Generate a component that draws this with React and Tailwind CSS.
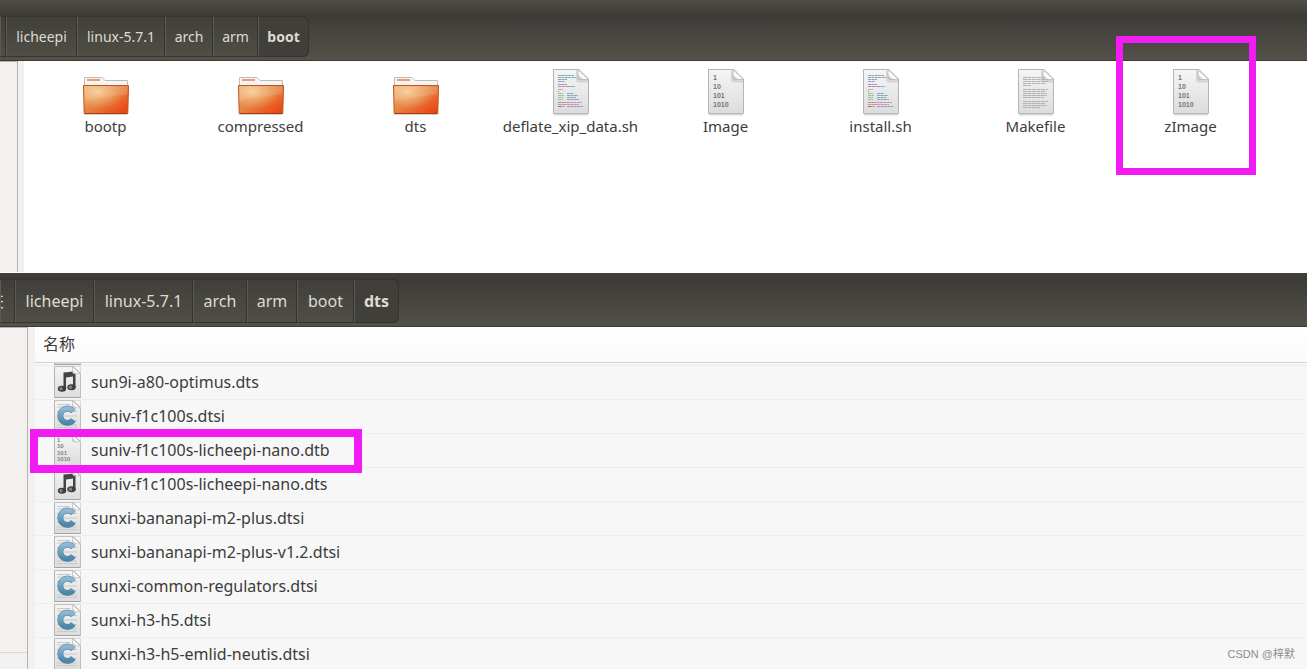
import React from "react";

const PATH_BUTTON = "border-r border-r-[#33322e] border-l border-l-[#5c5a52] text-center whitespace-nowrap overflow-hidden";

function PathBar({ crumbs, label, className }) {
  return (
    <nav aria-label={label} className={"flex text-[#dfdbd2] " + className}>
      {crumbs.map((c, i) => {
        const last = i === crumbs.length - 1;
        return (
          <button
            key={c.name}
            type="button"
            className={
              PATH_BUTTON +
              " " +
              c.width +
              (last
                ? " rounded-r-md border border-[#33322e] bg-[#403f3a] font-bold"
                : " border-y border-y-[#35342f] bg-linear-to-b from-[#403f3a] to-[#504e46]")
            }
          >
            {c.text ?? c.name}
          </button>
        );
      })}
    </nav>
  );
}

function Folder() {
  return (
    <svg viewBox="0 0 48 40" className="h-10 w-12" aria-hidden="true">
      <defs>
        <linearGradient id="folder-body" x1="0" y1="0" x2="1" y2="1">
          <stop offset="0" stopColor="#eda461" />
          <stop offset="0.5" stopColor="#e5823f" />
          <stop offset="0.8" stopColor="#ec5420" />
          <stop offset="1" stopColor="#d8470f" />
        </linearGradient>
        <radialGradient id="folder-glow" cx="0.3" cy="0.2" r="0.65">
          <stop offset="0" stopColor="#f8dcae" stopOpacity="0.85" />
          <stop offset="1" stopColor="#f5b47c" stopOpacity="0" />
        </radialGradient>
      </defs>
      <rect x="2" y="37" width="44" height="2" rx="1" fill="#000" opacity="0.18" />
      <path d="M2.500 12V1.500h17.500l3 3h22.500V12z" fill="#f5f5f4" stroke="#bdbcba" />
      <rect x="5" y="3" width="13" height="2" fill="#ef9c6c" />
      <path d="M1.500 9.500h45l-.7 28H2.200z" fill="url(#folder-body)" stroke="#c4531d" />
      <path d="M2.500 10.500h43l-.3 8C30 20 15 22 3 25z" fill="#fff" opacity="0.13" />
      <path d="M2 10h44l-.6 27H2.600z" fill="url(#folder-glow)" />
      <path d="M3 37.500h42" stroke="#a93d10" />
    </svg>
  );
}

function Paper({ children }) {
  return (
    <svg viewBox="0 0 38 48" className="h-12 w-[38px]" aria-hidden="true">
      <defs>
        <linearGradient id="paper" x1="0" y1="0" x2="0" y2="1">
          <stop offset="0" stopColor="#f5f5f5" />
          <stop offset="1" stopColor="#dcdcdc" />
        </linearGradient>
        <linearGradient id="paper-fold" x1="0" y1="1" x2="1" y2="0">
          <stop offset="0" stopColor="#a9a9a9" />
          <stop offset="0.35" stopColor="#fff" />
          <stop offset="1" stopColor="#dedede" />
        </linearGradient>
      </defs>
      <path d="M2 46.500h34" stroke="#000" strokeOpacity="0.15" strokeWidth="2" />
      <path d="M1.500 1.500H27l9.500 9.500v34.500h-35z" fill="url(#paper)" stroke="#b5b5b5" />
      <path d="M24 2v9.500q0 3 3 3h9V12z" fill="#888" opacity="0.25" />
      {children}
      <path d="M26 1.800V9q0 2.500 2.500 2.500h8z" fill="url(#paper-fold)" stroke="#b2b2b2" strokeWidth="0.7" />
    </svg>
  );
}

function Binary() {
  return (
    <Paper>
      <g fill="#777" fontFamily="Liberation Sans, sans-serif" fontWeight="bold" fontSize="7">
        <text x="6" y="12">1</text>
        <text x="6" y="21">10</text>
        <text x="6" y="30">101</text>
        <text x="6" y="39">1010</text>
      </g>
    </Paper>
  );
}

const SCRIPT_LINES = [
  [7, 6, 16, "#7fa8c4"], [9, 6, 18, "#7fa8c4"], [11, 6, 9, "#7fa8c4"], [13, 6, 7, "#7fa8c4"],
  [16, 6, 9, "#bf82d0"], [18, 6, 4, "#bf82d0"], [18, 10, 5, "#d57fb4"], [18, 15, 8, "#7fa8c4"],
  [21, 6, 5, "#93c48c"], [23, 6, 1, "#888"],
  [25, 6, 5, "#93c48c"], [25, 15, 7, "#7fa8c4"], [27, 6, 6, "#93c48c"], [27, 15, 11, "#7fa8c4"],
  [29, 6, 5, "#93c48c"], [29, 15, 9, "#7fa8c4"], [31, 6, 5, "#93c48c"], [31, 15, 12, "#7fa8c4"],
  [34, 6, 5, "#999"], [34, 11, 19, "#d988b6"], [36, 6, 6, "#b59aa8"], [36, 12, 15, "#d988b6"],
  [38, 6, 4, "#dd5151"], [38, 10, 3, "#aaa"], [38, 15, 16, "#7fa8c4"],
];

function Script() {
  return (
    <Paper>
      {SCRIPT_LINES.map(([y, x, w, color], i) => (
        <path key={i} d={`M${x} ${y + 0.5}h${w}`} stroke={color} strokeDasharray="3 0.4" />
      ))}
    </Paper>
  );
}

const TEXT_LINES = [[9, 20], [11, 24], [13, 25], [15, 23], [17, 8], [21, 25], [23, 23], [25, 24], [27, 24], [29, 21], [33, 25], [35, 22], [37, 24], [39, 17]];

function TextDoc() {
  return (
    <Paper>
      {TEXT_LINES.map(([y, w]) => (
        <path key={y} d={`M6 ${y + 0.5}h${w}`} stroke="#b3b3b3" strokeDasharray="4 0.5" />
      ))}
    </Paper>
  );
}

function SmallPaper({ children }) {
  return (
    <svg viewBox="0 0 27 32" className="block h-8 w-[27px] shrink-0" aria-hidden="true">
      <path d="M.5.500H19l7.500 7v24H.500z" fill="url(#paper)" stroke="#b5b5b5" />
      <path d="M.500.500h26v31" fill="none" stroke="#c8c8c8" strokeWidth="0.6" />
      <path d="M.500 31.500h26" stroke="#a4a4a4" />
      {children}
      <path d="M18.500 1v5q0 1.800 1.800 1.800h6z" fill="url(#paper-fold)" stroke="#b2b2b2" strokeWidth="0.6" />
    </svg>
  );
}

function MusicFile() {
  return (
    <SmallPaper>
      <path d="M9.500 6.500q6-.4 12-1.500v17H19V10.500l-7 1V23.500H9.500z" fill="#444" />
      <ellipse cx="8" cy="22.800" rx="4.200" ry="3" fill="#3d3d3d" />
      <ellipse cx="17.500" cy="21.300" rx="4.200" ry="3" fill="#3d3d3d" />
      <circle cx="7" cy="22.800" r="1.700" fill="#858585" />
      <circle cx="16.500" cy="21.300" r="1.700" fill="#858585" />
    </SmallPaper>
  );
}

function CFile() {
  return (
    <SmallPaper>
      <defs>
        <linearGradient id="c-letter" x1="0" y1="0" x2="0" y2="1">
          <stop offset="0" stopColor="#8fb9d2" />
          <stop offset="1" stopColor="#4c86a8" />
        </linearGradient>
      </defs>
      <path d="M3 4.500h13M3 7h12M3 11.500h20M3 16h20M3 20.500h20M3 25h20M3 27.500h20" stroke="#c9c9c9" strokeWidth="1.200" />
      <path d="M19.300 11.400A7.200 7.200 0 1 0 19.300 20" fill="none" stroke="#4a7f9f" strokeWidth="5.800" />
      <path d="M19.300 11.400A7.200 7.200 0 1 0 19.300 20" fill="none" stroke="url(#c-letter)" strokeWidth="4.800" />
    </SmallPaper>
  );
}

function BinaryFile() {
  return (
    <SmallPaper>
      <g fill="#858585" fontFamily="Liberation Sans, sans-serif" fontWeight="bold" fontSize="6">
        <text x="3" y="8">1</text>
        <text x="3" y="14">10</text>
        <text x="3" y="21">101</text>
        <text x="3" y="27">1010</text>
      </g>
    </SmallPaper>
  );
}

const TOP_CRUMBS = [
  { name: "home", text: "", width: "w-[6px]" },
  { name: "licheepi", width: "w-[71px]" },
  { name: "linux-5.7.1", width: "w-[88px]" },
  { name: "arch", width: "w-[48px]" },
  { name: "arm", width: "w-[45px]" },
  { name: "boot", width: "w-[51px]" },
];

const BOTTOM_CRUMBS = [
  { name: "home", text: <span className="flex justify-end pr-[10px]">夹</span>, width: "w-[15px]" },
  { name: "licheepi", width: "w-[79px]" },
  { name: "linux-5.7.1", width: "w-[99px]" },
  { name: "arch", width: "w-[54px]" },
  { name: "arm", width: "w-[50px]" },
  { name: "boot", width: "w-[57px]" },
  { name: "dts", width: "w-[45px]" },
];

const ICON_ITEMS = [
  ["bootp", Folder],
  ["compressed", Folder],
  ["dts", Folder],
  ["deflate_xip_data.sh", Script],
  ["Image", Binary],
  ["install.sh", Script],
  ["Makefile", TextDoc],
  ["zImage", Binary],
];

const ROWS = [
  ["sun9i-a80-optimus.dts", MusicFile],
  ["suniv-f1c100s.dtsi", CFile],
  ["suniv-f1c100s-licheepi-nano.dtb", BinaryFile],
  ["suniv-f1c100s-licheepi-nano.dts", MusicFile],
  ["sunxi-bananapi-m2-plus.dtsi", CFile],
  ["sunxi-bananapi-m2-plus-v1.2.dtsi", CFile],
  ["sunxi-common-regulators.dtsi", CFile],
  ["sunxi-h3-h5.dtsi", CFile],
  ["sunxi-h3-h5-emlid-neutis.dtsi", CFile],
];

export default function App() {
  return (
    <div className="relative flex h-screen flex-col overflow-hidden bg-white pr-[3px] font-['Noto_Sans','Noto_Sans_CJK_SC',sans-serif] text-[#3c3c3c]">
      <section className="flex shrink-0 flex-col">
        <div className="h-[13px] bg-linear-to-b from-[#4f4d46] to-[#403f3a]" />
        <header className="border-b border-[#3a3935] bg-linear-to-b from-[#3c3b37] to-[#545149] pt-[3px] pb-[3px]">
          <PathBar label="boot" crumbs={TOP_CRUMBS} className="h-[41px] text-sm" />
        </header>
        <div className="flex min-h-[211px]">
          <aside className="w-[18px] shrink-0 border-t border-r border-[#b5b3b0] bg-[#f2f1f0]" />
          <div className="w-[6px] shrink-0 bg-[#f2f1f0]" />
          <ul className="flex flex-1 flex-wrap content-start pt-[7px] pl-1">
            {ICON_ITEMS.map(([name, Icon]) => (
              <li key={name} className="relative w-[155px]">
                <button type="button" className="flex w-full flex-col items-center text-[15px]">
                  <span className="flex h-12 items-end">
                    <Icon />
                  </span>
                  <span className="leading-5">{name}</span>
                </button>
                {name === "zImage" && (
                  <span className="pointer-events-none absolute -top-8 left-[3px] h-[139px] w-[140px] border-[7px] border-[#f31bf3]" />
                )}
              </li>
            ))}
          </ul>
        </div>
      </section>

      <section className="mt-px flex min-h-0 flex-1 flex-col">
        <header className="shrink-0 border-t-4 border-b border-t-[#403f3a] border-b-[#3a3935] bg-linear-to-b from-[#3c3b37] to-[#545149] pt-[2px] pb-[3px]">
          <PathBar label="dts" crumbs={BOTTOM_CRUMBS} className="h-11 text-base" />
        </header>
        <div className="flex min-h-0 flex-1">
          <aside className="flex w-7 shrink-0 flex-col justify-end border-t border-r border-[#b5b3b0] bg-[#f2f1f0]">
            <div className="h-[17px] border-t border-[#dcdad7]" />
          </aside>
          <div className="w-[7px] shrink-0 bg-[#f2f1f0]" />
          <div className="min-w-0 flex-1 bg-[#f7f7f7]">
            <table className="w-full border-collapse">
              <thead>
                <tr>
                  <th scope="col" className="h-[35px] border-b border-[#d4d4d4] bg-linear-to-b from-white to-[#fafafa] p-0 pl-2 text-left text-base leading-8 font-normal">
                    名称
                  </th>
                </tr>
              </thead>
              <tbody>
                <tr aria-hidden="true">
                  <td className="p-0">
                    <div className="flex h-[3px] items-end overflow-hidden border-b border-[#eeeeee] pl-[19px]">
                      <SmallPaper />
                    </div>
                  </td>
                </tr>
                {ROWS.map(([name, Icon]) => (
                  <tr key={name}>
                    <td className="p-0">
                      <div className="relative flex h-[34px] items-center gap-[10px] border-b border-[#eeeeee] pl-[19px] text-base">
                        <Icon />
                        <span>{name}</span>
                        {name.endsWith(".dtb") && (
                          <span className="pointer-events-none absolute -top-[5px] -left-[5px] z-10 h-11 w-[332px] border-8 border-[#f31bf3]" />
                        )}
                      </div>
                    </td>
                  </tr>
                ))}
              </tbody>
            </table>
          </div>
        </div>
      </section>
      <p className="absolute right-[15px] bottom-[6px] font-['Liberation_Sans','Noto_Sans_CJK_SC',sans-serif] text-[11px] leading-[18px] text-[#8c8c8c]">
        CSDN @梓默
      </p>
    </div>
  );
}
